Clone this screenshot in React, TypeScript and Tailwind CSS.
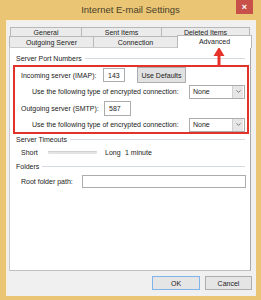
import { ChevronDown } from 'lucide-react'

const TAB = 'flex items-center justify-center border border-[#b8b8b8] bg-[#ebebeb] -ml-[1px] first:ml-0'

function Select({ value }: { value: string }) {
  return (
    <div className="w-[56px] h-[14px] border border-[#acacac] bg-white flex items-center">
      <span className="flex-1 pl-[3px]">{value}</span>
      <span className="w-[11px] h-[12px] mr-[1px] bg-[#e6e6e6] border-l border-[#d0d0d0] flex items-center justify-center">
        <ChevronDown size={7} strokeWidth={2.5} className="text-[#555]" />
      </span>
    </div>
  )
}

function GroupLabel({ label }: { label: string }) {
  return (
    <div className="flex items-center h-[9px] pl-[6px] pr-[5px]">
      <span className="pr-[3px]">{label}</span>
      <div className="flex-1 h-px bg-[#d5dbe0]" />
    </div>
  )
}

export default function App() {
  return (
    <div className="relative w-[261px] h-[300px] bg-[#e9c574] flex flex-col overflow-hidden font-['Liberation_Sans',Arial,sans-serif] text-[7px] leading-none text-[#222]">
      <div className="h-[20px] flex items-center justify-center text-[9.5px] text-[#4a3f2a]">
        Internet E-mail Settings
      </div>
      <div className="absolute left-[236px] top-0 w-[17px] h-[14px] bg-[#c8504b] flex items-center justify-center text-white text-[9px] font-bold">
        ×
      </div>

      <div className="ml-[6px] mr-[5px] h-[276px] bg-[#f0f0f0] border-l border-t border-[#f6efdc] flex flex-col pt-[6px] pl-[2px]">
        {/* tabs */}
        <div className="flex h-[10px] ml-[1px]">
          <div className={`${TAB} w-[72px] border-b-0 items-start pt-[1px]`}>General</div>
          <div className={`${TAB} w-[81px] border-b-0 items-start pt-[1px]`}>Sent Items</div>
          <div className={`${TAB} w-[89px] border-b-0 items-start pt-[1px]`}>Deleted Items</div>
        </div>
        <div className="flex h-[11px] items-end -mt-[1px]">
          <div className={`${TAB} w-[85px] h-[11px] border-b-0`}>Outgoing Server</div>
          <div className={`${TAB} w-[85px] h-[11px] border-b-0`}>Connection</div>
          <div className="relative z-10 -ml-[1px] w-[75px] h-[13px] -mb-[1px] bg-white border border-b-0 border-[#b8b8b8] flex justify-center pt-[2px]">
            Advanced
          </div>
        </div>

        {/* panel */}
        <div className="w-[242px] h-[224px] bg-white border border-[#c9c9c9] border-r-[#a8a8a8] border-b-[#c0c0c0] flex flex-col">
          <div className="mt-[6px]">
            <GroupLabel label="Server Port Numbers" />
          </div>

          <div className="ml-[3px] mt-[2px] w-[236px] h-[69px] border-2 border-[#e2332b] flex flex-col">
            <div className="h-[16px] flex items-center pl-[6px]">
              <span className="w-[82px]">Incoming server (IMAP):</span>
              <div className="w-[22px] h-[14px] border border-[#acacac] flex items-center pl-[4px]">143</div>
              <div className="ml-[12px] w-[49px] h-[16px] bg-[#e1e1e1] border border-[#adadad] flex items-center justify-center">
                Use Defaults
              </div>
            </div>
            <div className="h-[17px] flex items-center pl-[17px]">
              <span className="w-[157px]">Use the following type of encrypted connection:</span>
              <Select value="None" />
            </div>
            <div className="h-[17px] flex items-center pl-[6px]">
              <span className="w-[83px]">Outgoing server (SMTP):</span>
              <div className="w-[27px] h-[15px] border border-[#acacac] flex items-center pl-[4px]">587</div>
            </div>
            <div className="h-[15px] flex items-center pl-[17px]">
              <span className="w-[157px]">Use the following type of encrypted connection:</span>
              <Select value="None" />
            </div>
          </div>

          <div className="mt-[1px]">
            <GroupLabel label="Server Timeouts" />
          </div>
          <div className="mt-[3px] h-[10px] flex items-center pl-[11px]">
            <span className="w-[27px]">Short</span>
            <div className="w-[49px] h-[3px] bg-[#e4e4e4] border-t border-[#d0d0d0] rounded-[1px]" />
            <span className="ml-[8px] w-[20px]">Long</span>
            <span>1 minute</span>
          </div>

          <div className="mt-[5px]">
            <GroupLabel label="Folders" />
          </div>
          <div className="mt-[4px] h-[13px] flex items-center pl-[11px]">
            <span className="w-[61px]">Root folder path:</span>
            <div className="w-[164px] h-[13px] border border-[#acacac]" />
          </div>
        </div>

        {/* buttons */}
        <div className="mt-[5px] flex justify-end gap-[5px] pr-[4px]">
          <div className="w-[48px] h-[14px] bg-[#e5e5e5] border border-[#7eb4ea] flex items-center justify-center">OK</div>
          <div className="w-[47px] h-[14px] bg-[#e5e5e5] border border-[#adadad] flex items-center justify-center">Cancel</div>
        </div>
      </div>

      {/* annotation arrow */}
      <svg className="absolute left-[212px] top-[46px]" width="14" height="20" viewBox="0 0 14 20">
        <polygon points="7,1 1.5,10 12.5,10" fill="#e5322a" />
        <rect x="5.5" y="9" width="3" height="11" fill="#e5322a" />
      </svg>
    </div>
  )
}
